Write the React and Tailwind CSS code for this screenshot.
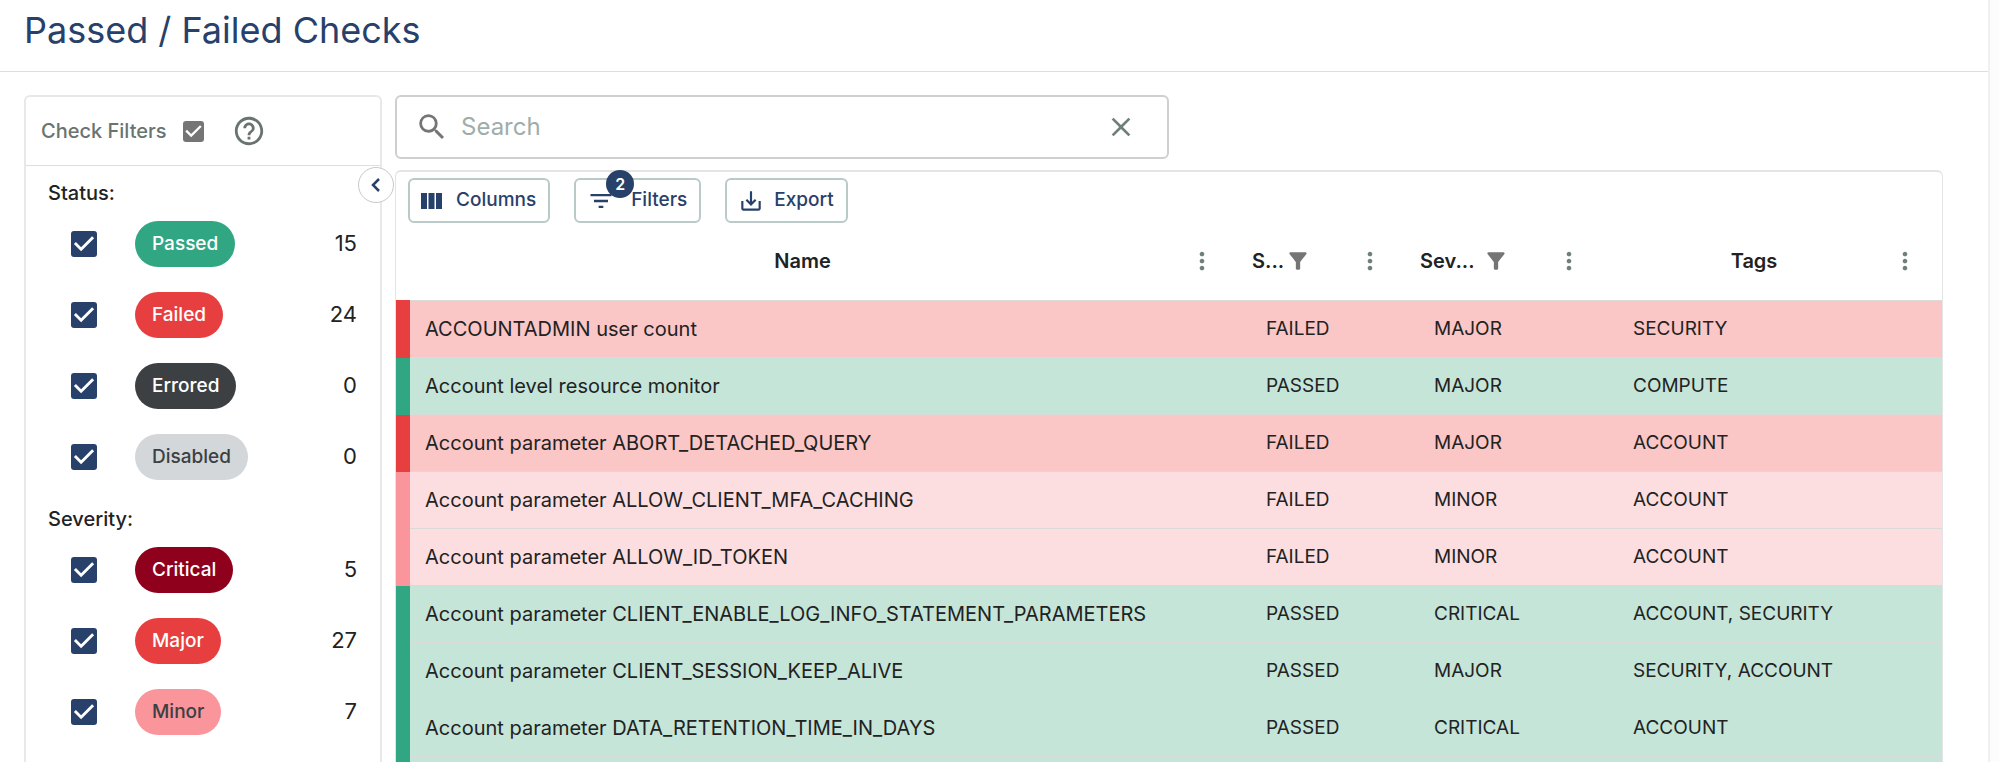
import React, { useState } from 'react';
import { MdClose, MdFilterAlt, MdFilterList, MdHelpOutline, MdMoreVert, MdSaveAlt, MdSearch } from 'react-icons/md';

const STATUS_FILTERS = [
  { label: 'Passed', count: 15, chip: 'bg-[#31a683] text-white' },
  { label: 'Failed', count: 24, chip: 'bg-[#e73f40] text-white' },
  { label: 'Errored', count: 0, chip: 'bg-[#3c4043] text-white' },
  { label: 'Disabled', count: 0, chip: 'bg-[#d3d7da] text-[#3c4043]' },
];

const SEVERITY_FILTERS = [
  { label: 'Critical', count: 5, chip: 'bg-[#8f001c] text-white' },
  { label: 'Major', count: 27, chip: 'bg-[#e73f40] text-white' },
  { label: 'Minor', count: 7, chip: 'bg-[#fa959b] text-[#3c4043]' },
];

const CHECKS = [
  { name: 'ACCOUNTADMIN user count', status: 'FAILED', severity: 'MAJOR', tags: 'SECURITY' },
  { name: 'Account level resource monitor', status: 'PASSED', severity: 'MAJOR', tags: 'COMPUTE' },
  { name: 'Account parameter ABORT_DETACHED_QUERY', status: 'FAILED', severity: 'MAJOR', tags: 'ACCOUNT' },
  { name: 'Account parameter ALLOW_CLIENT_MFA_CACHING', status: 'FAILED', severity: 'MINOR', tags: 'ACCOUNT' },
  { name: 'Account parameter ALLOW_ID_TOKEN', status: 'FAILED', severity: 'MINOR', tags: 'ACCOUNT' },
  {
    name: 'Account parameter CLIENT_ENABLE_LOG_INFO_STATEMENT_PARAMETERS',
    status: 'PASSED',
    severity: 'CRITICAL',
    tags: 'ACCOUNT, SECURITY',
  },
  { name: 'Account parameter CLIENT_SESSION_KEEP_ALIVE', status: 'PASSED', severity: 'MAJOR', tags: 'SECURITY, ACCOUNT' },
  { name: 'Account parameter DATA_RETENTION_TIME_IN_DAYS', status: 'PASSED', severity: 'CRITICAL', tags: 'ACCOUNT' },
  { name: '', status: '', severity: '', tags: '' },
];

function rowColors(check) {
  if (check.status !== 'FAILED') return { row: 'bg-[#c5e5d9]', bar: 'border-l-[#31a683]' };
  if (check.severity === 'MINOR') return { row: 'bg-[#fcdee0]', bar: 'border-l-[#fa959b]' };
  return { row: 'bg-[#fac6c6]', bar: 'border-l-[#e73f40]' };
}

function Checkbox({ id, label, boxClass }) {
  const [checked, setChecked] = useState(true);
  return (
    <span className="relative flex">
      <input
        id={id}
        type="checkbox"
        aria-label={label}
        checked={checked}
        onChange={(e) => setChecked(e.target.checked)}
        className={`appearance-none rounded-[3px] ${boxClass}`}
      />
      {checked ? (
        <svg viewBox="3 3 18 18" className="pointer-events-none absolute inset-0 size-full" fill="#fff">
          <path d="M10 17l-5-5 1.410-1.410L10 14.170l7.590-7.590L19 8z" />
        </svg>
      ) : null}
    </span>
  );
}

function FilterGroup({ title, items }) {
  return (
    <fieldset>
      <legend className="pl-[22px] text-xl leading-[30px] font-medium text-[#222]">{title}</legend>
      {items.map(({ label, count, chip }) => (
        <div key={label} className="flex h-[71px] items-center pr-[23px] pl-[45px]">
          <Checkbox id={`filter-${label}`} boxClass="size-[26px] bg-[#27416a]" />
          <label htmlFor={`filter-${label}`} className={`ml-[38px] rounded-full px-[17px] text-[19px] leading-[46px] font-medium ${chip}`}>
            {label}
          </label>
          <span className="ml-auto text-[22px] text-[#222]">{count}</span>
        </div>
      ))}
    </fieldset>
  );
}

function ColumnHeader({ title, filtered, className, labelClass }) {
  return (
    <th className="p-0 font-semibold">
      <div className={`flex items-center ${className}`}>
        {filtered ? (
          <>
            <span className={`shrink-0 ${labelClass}`}>{title}</span>
            <MdFilterAlt className="size-[26px] shrink-0 text-[#757575]" />
          </>
        ) : (
          <span className="flex-1 text-center">{title}</span>
        )}
        <button type="button" aria-label={`${title} column menu`} className="ml-auto w-0 text-[#6f7f7b]">
          <MdMoreVert className="-ml-[14px] size-7" />
        </button>
      </div>
    </th>
  );
}

function ToolbarButton({ icon, children, className }) {
  return (
    <button
      type="button"
      className={`relative flex h-[45px] items-center rounded-md border-2 border-[#b9cac8] pr-3 pl-[11px] text-[19px] font-medium text-[#27416a] ${className}`}
    >
      {icon}
      {children}
    </button>
  );
}

function ColumnsIcon() {
  return (
    <svg viewBox="0 0 21 16" className="h-4 w-[21px]" fill="currentColor">
      <path d="M0 0h6v16H0zM7.500 0h6v16h-6zM15 0h6v16h-6z" />
    </svg>
  );
}

export default function App() {
  const [query, setQuery] = useState('');

  return (
    <div className="h-screen overflow-hidden bg-[#fcfcfc] pr-[9px] font-['Inter',sans-serif]">
      <div className="flex h-full flex-col border-r-2 border-[#f0f0f0] bg-white">
        <header className="flex h-[72px] shrink-0 items-start border-b border-[#dedede] pl-6">
          <h1 className="text-4xl leading-[60px] text-[#27416a]">Passed / Failed Checks</h1>
        </header>

        <main className="flex min-h-0 flex-1 items-stretch gap-[13px] pt-[23px] pr-[45px] pl-6">
          <aside className="relative w-[358px] shrink-0 rounded-t-md border-2 border-b-0 border-[#e8e8e8]">
            <div className="flex h-[69px] items-center border-b border-[#dedede] pl-[15px] text-xl text-[#697471]">
              <h2 className="font-medium">Check Filters</h2>
              <span className="ml-4">
                <Checkbox label="Select all filters" boxClass="size-[21px] bg-[#757575]" />
              </span>
              <button type="button" aria-label="Help" className="ml-7 text-[#697471]">
                <MdHelpOutline className="size-[34px]" />
              </button>
            </div>
            <div className="flex flex-col gap-3 pt-3">
              <FilterGroup title="Status:" items={STATUS_FILTERS} />
              <FilterGroup title="Severity:" items={SEVERITY_FILTERS} />
            </div>
            <button
              type="button"
              aria-label="Collapse filters"
              className="absolute top-[70px] -right-[14px] z-10 flex size-9 items-center justify-center rounded-full border border-[#c8c8c8] bg-white text-[#27416a]"
            >
              <svg viewBox="0 0 10 16" className="h-4 w-[10px]" fill="none" stroke="currentColor" strokeWidth="2.500">
                <path d="M8 2L2 8l6 6" />
              </svg>
            </button>
          </aside>

          <section className="flex min-w-0 flex-1 flex-col">
            <div className="flex h-16 w-1/2 shrink-0 items-center rounded-md border-2 border-[#cfcfcf] pr-[30px] pl-[18px]">
              <MdSearch className="size-[34px] text-[#757575]" />
              <input
                type="text"
                aria-label="Search"
                placeholder="Search"
                value={query}
                onChange={(e) => setQuery(e.target.value)}
                className="ml-3 min-w-0 flex-1 text-2xl text-[#222] outline-none placeholder:text-[#9fada9]"
              />
              <button type="button" aria-label="Clear search" onClick={() => setQuery('')} className="text-[#6f7f7b]">
                <MdClose className="size-8" />
              </button>
            </div>

            <div className="mt-[11px] flex min-h-0 flex-1 flex-col rounded-t-md border border-t-2 border-b-0 border-[#e4e4e4]">
              <div className="flex items-center gap-6 pt-[6px] pl-3">
                <ToolbarButton icon={<ColumnsIcon />} className="gap-[14px]">
                  Columns
                </ToolbarButton>
                <ToolbarButton icon={<MdFilterList className="size-7" />} className="gap-4">
                  Filters
                  <span className="absolute -top-[10px] left-[30px] flex size-7 items-center justify-center rounded-full bg-[#27416a] text-base font-semibold text-white">
                    2
                  </span>
                </ToolbarButton>
                <ToolbarButton icon={<MdSaveAlt className="size-[26px]" />} className="gap-[10px]">
                  Export
                </ToolbarButton>
              </div>

              <table className="w-full table-fixed border-collapse text-left text-[#222]">
                <colgroup>
                  <col />
                  <col className="w-[168px]" />
                  <col className="w-[199px]" />
                  <col className="w-[339px]" />
                </colgroup>
                <thead>
                  <tr className="h-[77px] text-xl">
                    <ColumnHeader title="Name" className="pr-[34px]" />
                    <ColumnHeader title="S..." filtered className="pr-[34px] pl-4" labelClass="w-[33px]" />
                    <ColumnHeader title="Sev..." filtered className="pr-[34px] pl-4" labelClass="w-[63px]" />
                    <ColumnHeader title="Tags" className="pr-[37px]" />
                  </tr>
                </thead>
                <tbody>
                  {CHECKS.map((check, i) => {
                    const colors = rowColors(check);
                    return (
                      <tr key={i} className={`h-[57px] border-t border-[#dadada] text-[19px] leading-7 ${colors.row}`}>
                        <td className={`border-l-[14px] p-0 pl-[15px] text-xl leading-7 whitespace-nowrap ${colors.bar}`}>
                          {check.name}
                        </td>
                        <td className="p-0 pl-[30px]">{check.status}</td>
                        <td className="p-0 pl-[30px]">{check.severity}</td>
                        <td className="p-0 pl-[30px]">{check.tags}</td>
                      </tr>
                    );
                  })}
                </tbody>
              </table>
            </div>
          </section>
        </main>
      </div>
    </div>
  );
}
